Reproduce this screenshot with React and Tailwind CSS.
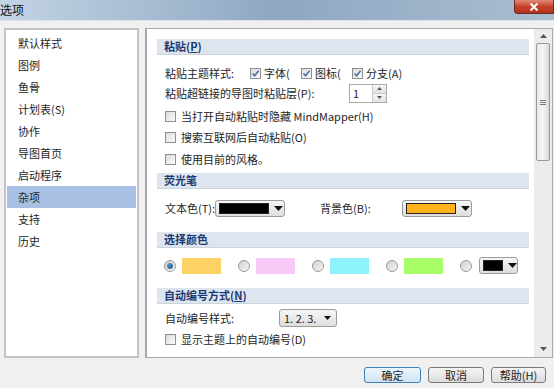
const FONT = { fontFamily: '"Noto Sans CJK SC", "Noto Sans", sans-serif' };

const NAV = ['默认样式', '图例', '鱼骨', '计划表(S)', '协作', '导图首页', '启动程序', '杂项', '支持', '历史'];

function Check({ checked }) {
  return (
    <span className="flex h-[11px] w-[11px] shrink-0 items-center justify-center border border-[#8f8f8f] bg-gradient-to-br from-[#dcdcdc] to-[#fbfbfb]">
      {checked && (
        <svg width="9" height="9" viewBox="0 0 9 9">
          <path d="M1.5 4.5 L3.6 6.8 L7.6 1.8" fill="none" stroke="#4a6fa5" strokeWidth="1.6" />
        </svg>
      )}
    </span>
  );
}

function Radio({ selected }) {
  return (
    <span className="flex h-[12px] w-[12px] shrink-0 items-center justify-center rounded-full border border-[#9a9a9a] bg-gradient-to-br from-[#cfcfcf] to-[#f7f7f7]">
      {selected && <span className="h-[6px] w-[6px] rounded-full bg-gradient-to-br from-[#5aa2d8] to-[#1b5a8e]" />}
    </span>
  );
}

function Arrow() {
  return (
    <svg width="9" height="5" viewBox="0 0 9 5" className="shrink-0">
      <path d="M0 0 H9 L4.5 5 Z" fill="#111" />
    </svg>
  );
}

function ColorDrop({ color, width, swatch }) {
  return (
    <div
      className="flex h-[17px] shrink-0 items-center gap-[5px] rounded-[3px] border border-[#9b9b9b] bg-gradient-to-b from-[#f6f6f6] to-[#dedede] pl-[3px]"
      style={{ width }}
    >
      <span className="h-[11px] border border-[#222]" style={{ width: swatch, background: color }} />
      <Arrow />
    </div>
  );
}

function Header({ children, mt }) {
  return (
    <div className={`flex h-[16px] items-center border-b border-[#cbd4dd] bg-[#dde6ee] pl-[7px] text-[11px] font-bold text-[#1d3973] ${mt}`}>
      {children}
    </div>
  );
}

function CheckRow({ label, mt }) {
  return (
    <div className={`flex h-[20px] items-center gap-[5px] pl-[8px] ${mt}`}>
      <Check />
      <span>{label}</span>
    </div>
  );
}

function Btn({ children, primary, w }) {
  return (
    <button
      type="button"
      className={`flex h-[16px] items-center justify-center rounded-[3px] border bg-gradient-to-b text-[11px] text-[#1e1e1e] ${
        primary ? 'border-[#3d7fb8] from-[#eef6fc] to-[#cfe3f3]' : 'border-[#7a7a7a] from-[#f4f4f4] to-[#dcdcdc]'
      }`}
      style={{ width: w }}
    >
      {children}
    </button>
  );
}

export default function App() {
  return (
    <div className="flex h-[388px] w-[554px] flex-col overflow-hidden bg-[#f0f0f0] text-[11px] text-[#1e1e1e]" style={FONT}>
      <div className="flex h-[21px] shrink-0 items-start justify-between border-b border-[#d8e2ec] bg-gradient-to-r from-[#c3d4e5] via-[#8ea8c2] to-[#a9bdd0]">
        <span className="mt-[1px] text-[12px] text-[#111]">选项</span>
        <div className="flex h-[14px] w-[40px] items-center justify-center rounded-bl-[4px] border border-t-0 border-[#6e2a1e] bg-gradient-to-b from-[#e08a77] via-[#c4412a] to-[#b5331e]">
          <svg width="10" height="8" viewBox="0 0 10 8">
            <path d="M1.5 0.5 L8.5 7.5 M8.5 0.5 L1.5 7.5" stroke="#fff" strokeWidth="2" />
          </svg>
        </div>
      </div>

      <div className="flex gap-[6px] px-[4px] pt-[7px]">
        <div className="h-[330px] w-[135px] shrink-0 border-2 border-[#c0c4ca] bg-white px-[1px] pt-[2px]">
          {NAV.map((item, i) => (
            <div key={item} className={`flex h-[22px] items-center pl-[11px] ${i === 7 ? 'bg-[#a8c0e2]' : ''}`}>
              {item}
            </div>
          ))}
        </div>

        <div className="flex h-[330px] w-[408px] shrink-0 border border-l-2 border-[#a4aab2] bg-white">
          <div className="flex-1 pl-[10px] pr-[5px] pt-[10px]">
            <Header>
              粘贴(<span className="underline">P</span>)
            </Header>

            <div className="mt-[8px] flex h-[20px] items-center whitespace-nowrap pl-[8px]">
              <span className="w-[85px] shrink-0">粘贴主题样式:</span>
              <Check checked />
              <span className="ml-[3px] mr-[10px] w-[27px] shrink-0">字体(</span>
              <Check checked />
              <span className="ml-[3px] mr-[10px] w-[27px] shrink-0">图标(</span>
              <Check checked />
              <span className="ml-[3px]">分支(A)</span>
            </div>

            <div className="flex h-[20px] items-center pl-[8px]">
              <span className="w-[184px] shrink-0 whitespace-nowrap">粘贴超链接的导图时粘贴层(P):</span>
              <div className="flex h-[19px] w-[38px] items-stretch border border-[#a9a9a9] bg-white">
                <span className="flex flex-1 items-center pl-[3px]">1</span>
                <div className="flex w-[14px] flex-col border-l border-[#c8c8c8]">
                  <span className="flex flex-1 items-center justify-center border-b border-[#c8c8c8] bg-gradient-to-b from-[#f7f7f7] to-[#e2e2e2]">
                    <svg width="5" height="3" viewBox="0 0 5 3"><path d="M0 3 L2.5 0 L5 3 Z" fill="#4a5a6a" /></svg>
                  </span>
                  <span className="flex flex-1 items-center justify-center bg-gradient-to-b from-[#f7f7f7] to-[#e2e2e2]">
                    <svg width="5" height="3" viewBox="0 0 5 3"><path d="M0 0 L2.5 3 L5 0 Z" fill="#4a5a6a" /></svg>
                  </span>
                </div>
              </div>
            </div>

            <CheckRow mt="mt-[3px]" label="当打开自动粘贴时隐藏 MindMapper(H)" />
            <CheckRow mt="mt-[1px]" label="搜索互联网后自动粘贴(O)" />
            <CheckRow mt="mt-[2px]" label="使用目前的风格。" />

            <Header mt="mt-[4px]">荧光笔</Header>
            <div className="mt-[10px] flex h-[18px] items-center whitespace-nowrap pl-[8px]">
              <span className="w-[50px] shrink-0">文本色(T):</span>
              <ColorDrop color="#000" width={70} swatch={50} />
              <span className="ml-[35px] w-[82px] shrink-0">背景色(B):</span>
              <ColorDrop color="#ffb31a" width={70} swatch={50} />
            </div>

            <Header mt="mt-[15px]">选择颜色</Header>
            <div className="mt-[9px] flex h-[17px] items-center pl-[7px]">
              {['#fdd163', '#f9caf7', '#8df2fb', '#a6fd66'].map((c, i) => (
                <div key={c} className="flex w-[74px] shrink-0 items-center gap-[6px]">
                  <Radio selected={i === 0} />
                  <span className="h-[16px] w-[39px]" style={{ background: c }} />
                </div>
              ))}
              <div className="flex items-center gap-[7px]">
                <Radio />
                <ColorDrop color="#000" width={39} swatch={20} />
              </div>
            </div>

            <Header mt="mt-[14px]">
              自动编号方式(<span className="underline">N</span>)
            </Header>
            <div className="mt-[5px] flex h-[18px] items-center pl-[8px]">
              <span className="w-[114px] shrink-0">自动编号样式:</span>
              <div className="flex h-[18px] w-[58px] items-center justify-between rounded-[3px] border border-[#9b9b9b] bg-gradient-to-b from-[#f6f6f6] to-[#dedede] pl-[4px] pr-[5px]">
                <span>1. 2. 3.</span>
                <svg width="7" height="4" viewBox="0 0 7 4"><path d="M0 0 H7 L3.5 4 Z" fill="#111" /></svg>
              </div>
            </div>
            <CheckRow mt="mt-[2px]" label="显示主题上的自动编号(D)" />
          </div>

          <div className="flex w-[18px] shrink-0 flex-col items-center bg-[#ececec] pt-[5px]">
            <svg width="7" height="4" viewBox="0 0 7 4"><path d="M0 4 L3.5 0 L7 4 Z" fill="#555" /></svg>
            <div className="mt-[5px] flex h-[118px] w-[14px] items-center justify-center rounded-[2px] border border-[#9a9a9a] bg-gradient-to-r from-[#e8e8e8] via-[#f6f6f6] to-[#d8d8d8]">
              <div className="flex flex-col gap-[1px]">
                <span className="h-px w-[6px] bg-[#777]" />
                <span className="h-px w-[6px] bg-[#777]" />
                <span className="h-px w-[6px] bg-[#777]" />
              </div>
            </div>
            <div className="flex-1" />
            <svg width="7" height="4" viewBox="0 0 7 4" className="mb-[6px]"><path d="M0 0 H7 L3.5 4 Z" fill="#555" /></svg>
          </div>
        </div>
      </div>

      <div className="mt-[9px] flex justify-end gap-[7px] pr-[8px]">
        <Btn primary w={57}>确定</Btn>
        <Btn w={56}>取消</Btn>
        <Btn w={55}>帮助(H)</Btn>
      </div>
    </div>
  );
}
